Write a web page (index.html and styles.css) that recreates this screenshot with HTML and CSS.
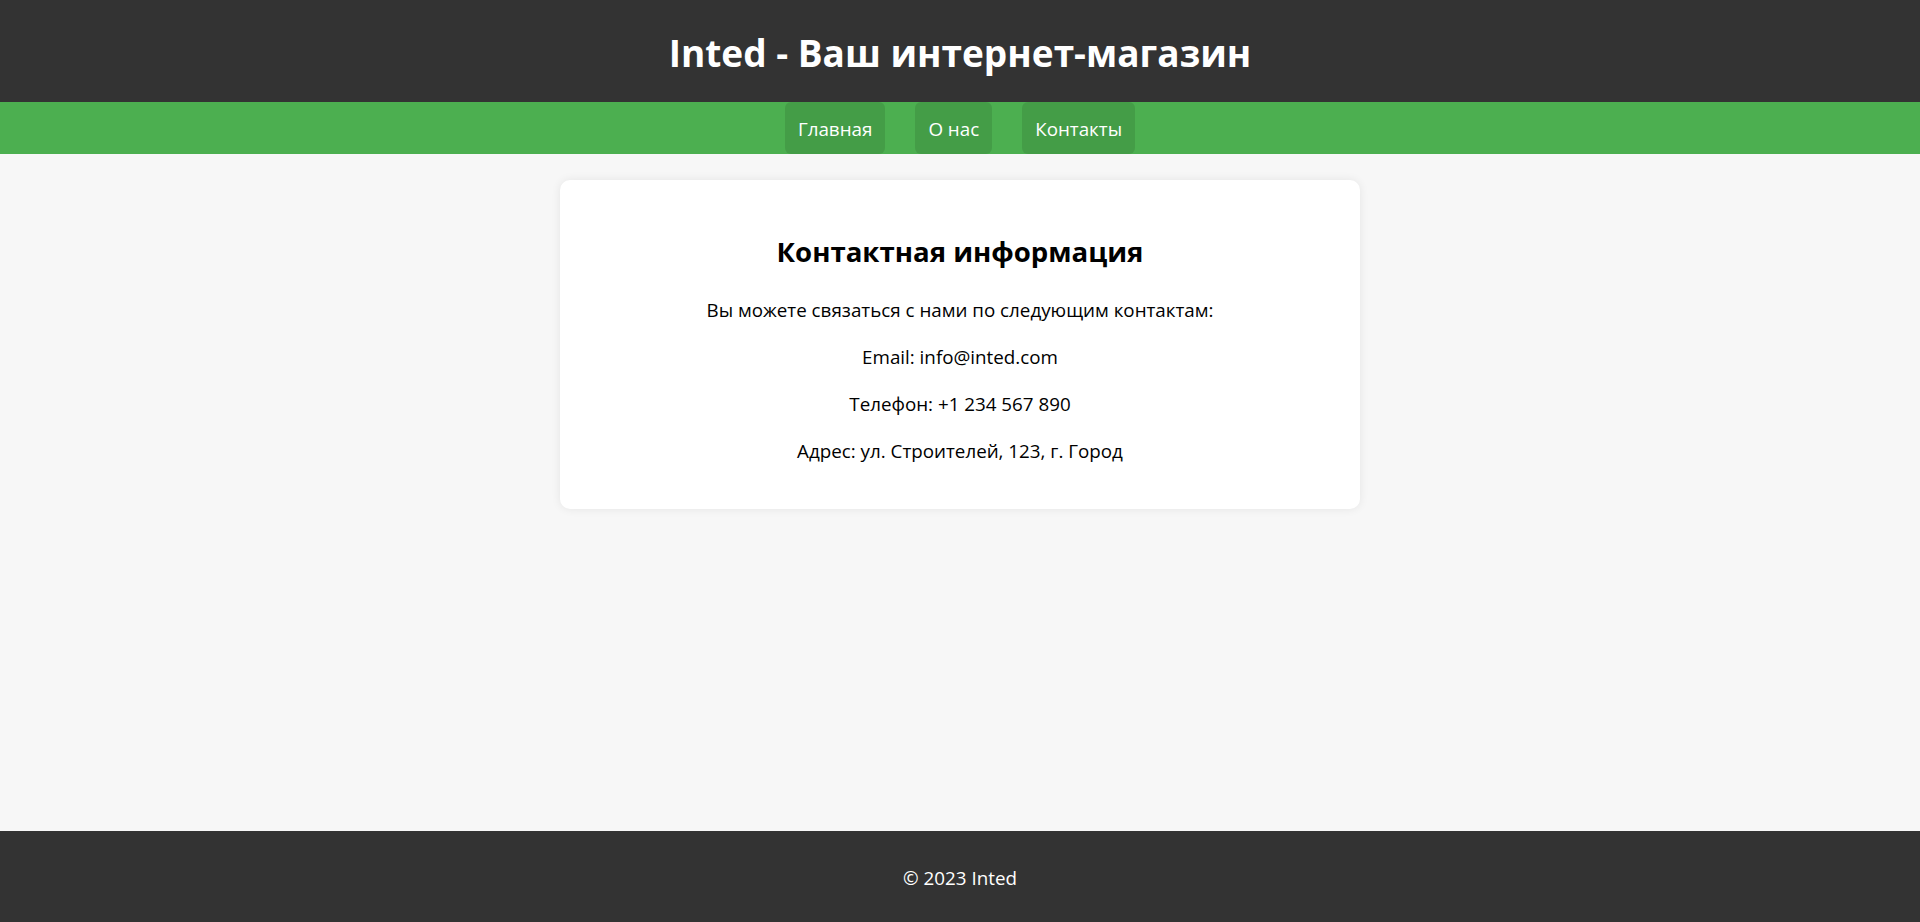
FILE: index.html
```html
<!DOCTYPE html>
<html lang="ru">
<head>
<meta charset="utf-8">
<title>Inted - Контакты</title>
<link rel="stylesheet" href="styles.css">
</head>
<body>
<header class="site-header">
  <h1 class="site-title">Inted - Ваш интернет-магазин</h1>
</header>
<nav class="site-nav">
  <a class="nav-link" href="#">Главная</a>
  <a class="nav-link" href="#">О нас</a>
  <a class="nav-link" href="#">Контакты</a>
</nav>
<main class="content">
  <section class="card">
    <h2 class="card-title">Контактная информация</h2>
    <p class="card-text">Вы можете связаться с нами по следующим контактам:</p>
    <p class="card-text">Email: info@inted.com</p>
    <p class="card-text">Телефон: +1 234 567 890</p>
    <p class="card-text">Адрес: ул. Строителей, 123, г. Город</p>
  </section>
</main>
<footer class="site-footer">
  <p class="footer-text">&copy; 2023 Inted</p>
</footer>
</body>
</html>
```
FILE: styles.css
```css
* { box-sizing: border-box; }
html, body { height: 100%; }
body {
  margin: 0;
  font-family: "Open Sans", "Noto Sans", "DejaVu Sans", sans-serif;
  font-size: 18.8px;
  line-height: 27px;
  color: #000;
  background: #f7f7f7;
  display: flex;
  flex-direction: column;
  min-height: 100vh;
}
.site-header {
  background: #333333;
  color: #fff;
  text-align: center;
  padding: 26px 0 23px;
}
.site-title {
  margin: 0;
  font-size: 37px;
  line-height: 53px;
  font-weight: 700;
}
.site-nav {
  background: #4caf50;
  display: flex;
  justify-content: center;
  gap: 30px;
}
.nav-link {
  color: #fff;
  text-decoration: none;
  padding: 14px 13px 11px;
  background: rgba(0, 0, 0, 0.1);
  border-radius: 6px;
  line-height: 27px;
}
.content {
  flex: 1;
  display: flex;
  flex-direction: column;
  align-items: center;
  padding-top: 26px;
}
.card {
  width: 800px;
  background: #fff;
  border-radius: 10px;
  box-shadow: 0 0 10px rgba(0, 0, 0, 0.08);
  padding: 25px;
  text-align: center;
}
.card-title {
  margin: 25px 0;
  font-size: 27.6px;
  line-height: 40px;
  font-weight: 700;
  padding-top: 1px;
}
.card-text {
  margin: 20px 0;
  padding-top: 1px;
  line-height: 26px;
}
.site-footer {
  background: #333333;
  color: #fff;
  text-align: center;
  padding: 12px 0 11px;
}
.footer-text {
  margin: 20px 0;
  padding-top: 2px;
  line-height: 26px;
}
```
